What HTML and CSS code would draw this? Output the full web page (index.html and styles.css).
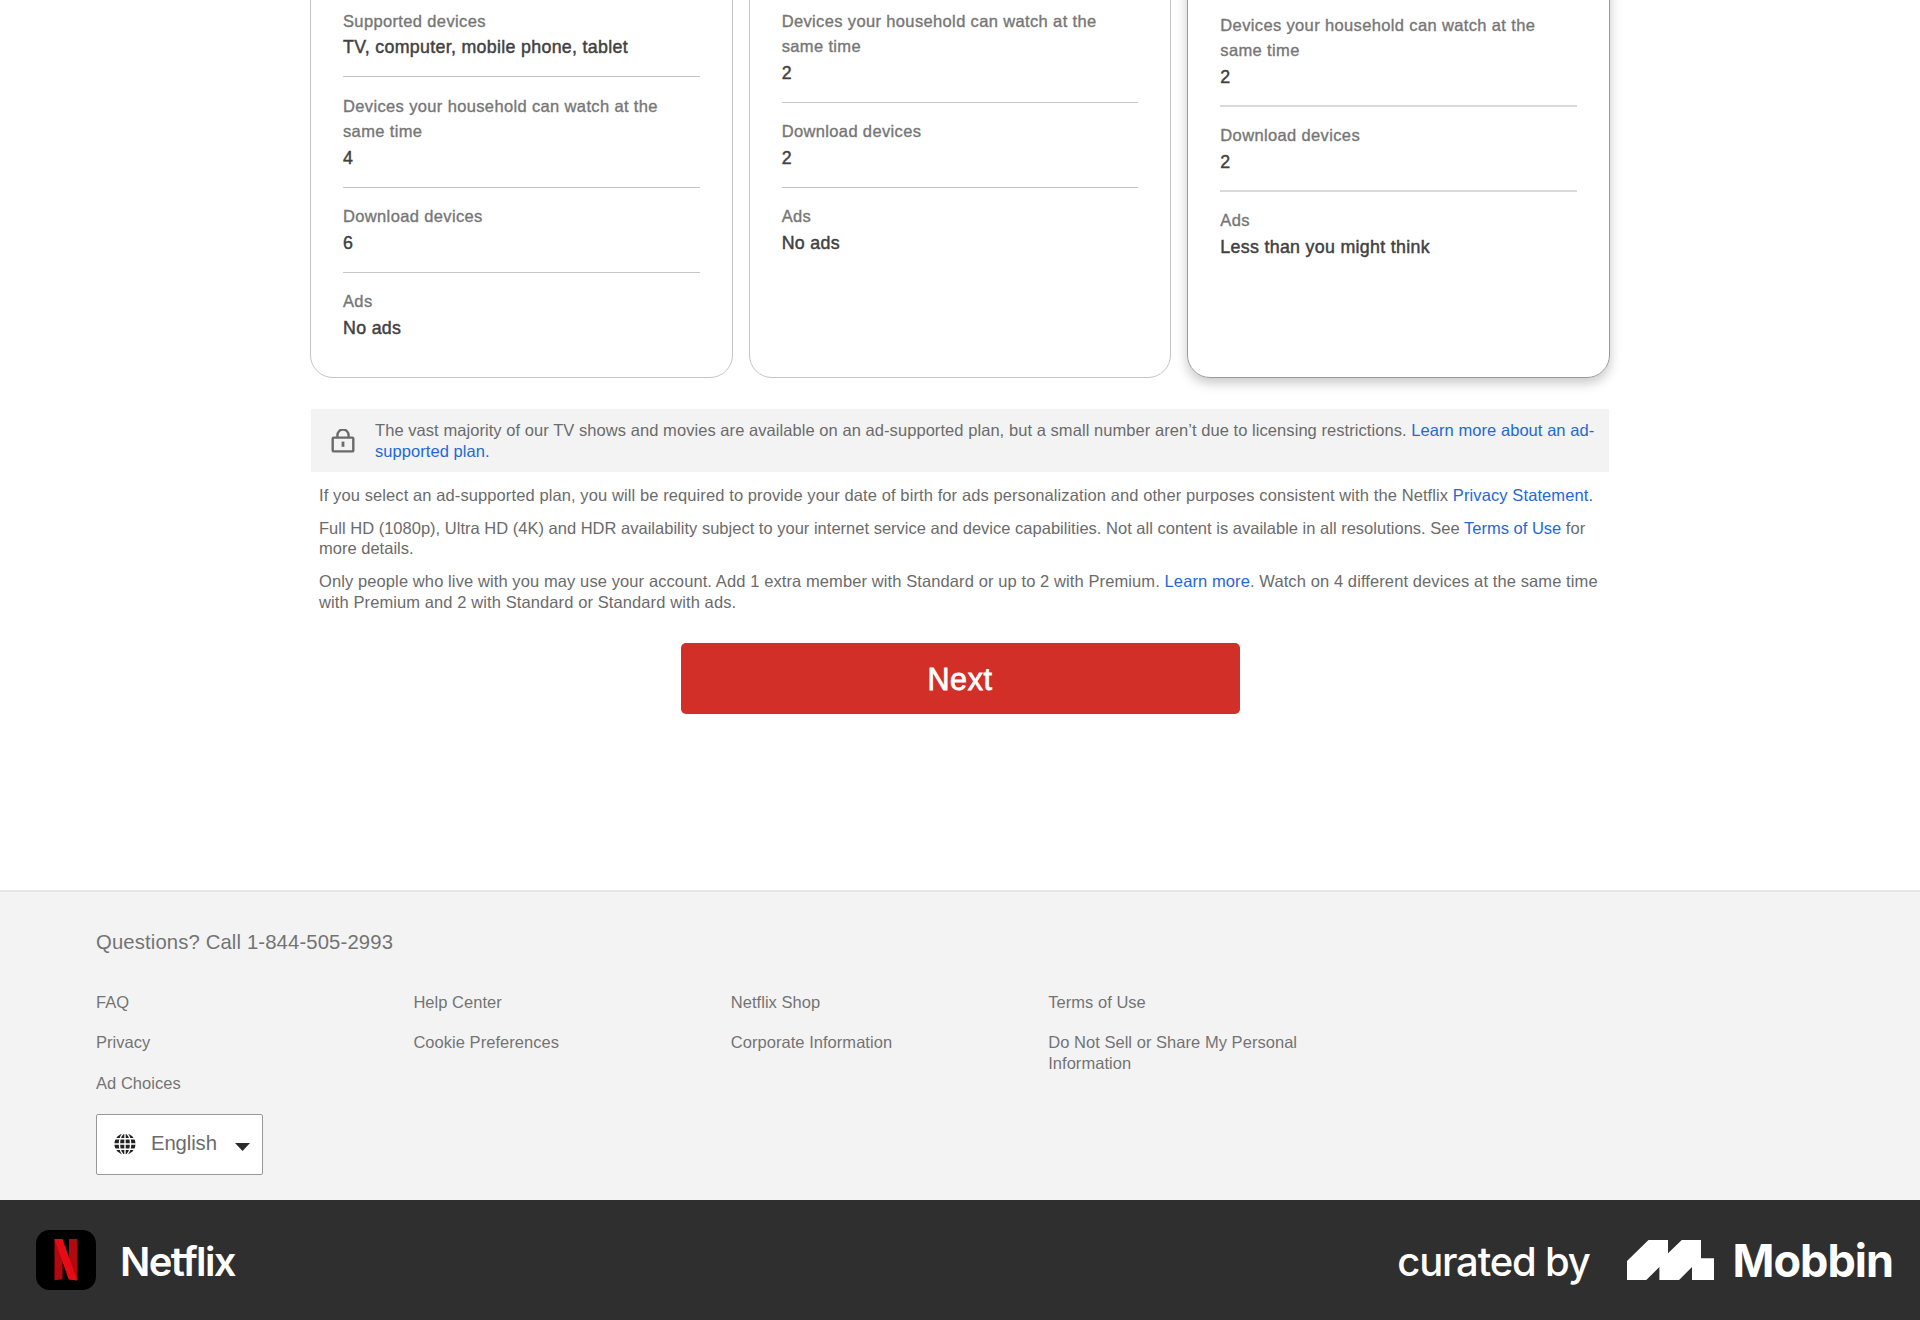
FILE: index.html
```html
<!DOCTYPE html>
<html lang="en">
<head>
<meta charset="utf-8">
<title>Netflix</title>
<link rel="stylesheet" href="styles.css">
</head>
<body>
<main class="main">
  <section class="plans">
    <article class="plan">
      <dl class="feature"><dt>Supported devices</dt><dd>TV, computer, mobile phone, tablet</dd></dl>
      <dl class="feature"><dt>Devices your household can watch at the same time</dt><dd>4</dd></dl>
      <dl class="feature"><dt>Download devices</dt><dd>6</dd></dl>
      <dl class="feature"><dt>Ads</dt><dd>No ads</dd></dl>
    </article>
    <article class="plan">
      <dl class="feature"><dt>Devices your household can watch at the same time</dt><dd>2</dd></dl>
      <dl class="feature"><dt>Download devices</dt><dd>2</dd></dl>
      <dl class="feature"><dt>Ads</dt><dd>No ads</dd></dl>
    </article>
    <article class="plan plan-selected">
      <dl class="feature"><dt>Devices your household can watch at the same time</dt><dd>2</dd></dl>
      <dl class="feature"><dt>Download devices</dt><dd>2</dd></dl>
      <dl class="feature"><dt>Ads</dt><dd>Less than you might think</dd></dl>
    </article>
  </section>

  <div class="notice">
    <svg class="lock" viewBox="0 0 24 24" fill="none" stroke="#6b6b6b" stroke-width="2.4">
      <rect x="1.7" y="8.6" width="20.6" height="13.8" rx="1"/>
      <path d="M6.4 8.5V6.2a5.6 5.6 0 0 1 11.2 0V8.5"/>
      <path d="M12 12.6v5.2" stroke-width="2.8"/>
    </svg>
    <p>The vast majority of our TV shows and movies are available on an ad-supported plan, but a small number aren’t due to licensing restrictions. <a>Learn more about an ad-<br>supported plan.</a></p>
  </div>

  <div class="legal">
    <p>If you select an ad-supported plan, you will be required to provide your date of birth for ads personalization and other purposes consistent with the Netflix <a>Privacy Statement.</a></p>
    <p class="tight">Full HD (1080p), Ultra HD (4K) and HDR availability subject to your internet service and device capabilities. Not all content is available in all resolutions. See <a>Terms of Use</a> for<br>more details.</p>
    <p>Only people who live with you may use your account. Add 1 extra member with Standard or up to 2 with Premium. <a>Learn more</a>. Watch on 4 different devices at the same time<br>with Premium and 2 with Standard or Standard with ads.</p>
  </div>

  <button class="next">Next</button>
</main>

<footer class="footer">
  <p class="questions">Questions? Call 1-844-505-2993</p>
  <div class="links">
    <ul><li>FAQ</li><li>Privacy</li><li>Ad Choices</li></ul>
    <ul><li>Help Center</li><li>Cookie Preferences</li></ul>
    <ul><li>Netflix Shop</li><li>Corporate Information</li></ul>
    <ul><li>Terms of Use</li><li>Do Not Sell or Share My Personal Information</li></ul>
  </div>
  <div class="language">
    <svg class="globe" viewBox="0 0 22 22">
      <circle cx="11" cy="11" r="10.6" fill="#222"/>
      <g fill="none" stroke="#fff" stroke-width="1.4">
        <path d="M0 5.8h22M0 11h22M0 16.2h22M11 0v22"/>
        <ellipse cx="11" cy="11" rx="5.6" ry="11"/>
      </g>
    </svg>
    <span class="language-name">English</span>
    <svg class="caret" viewBox="0 0 15 8"><path d="M0 0h15L7.5 8z" fill="#2b2b2b"/></svg>
  </div>
</footer>

<div class="credit">
  <div class="app">
    <svg class="app-icon" viewBox="0 0 60 60">
      <rect width="60" height="60" rx="13.5"/>
      <path d="M18.5 9h8v40.2l-8 1zM33 9h8.200v41.200l-8.200-1z" fill="#b20910"/>
      <path d="M18.500 9h8l14.700 41.500-8.500-1z" fill="#e50c15"/>
    </svg>
    <span class="app-name">Netflix</span>
  </div>
  <div class="curator">
    <span class="curated">curated by</span>
    <svg class="mark" viewBox="0 0 87 40"><path d="M0 21 21.500 0H41V13.300L54.800 0H74V18.300H87V40H65V27L52 40H32.400V27L19.300 40H0z" fill="#fff"/></svg>
    <span class="mobbin">Mobbin</span>
  </div>
</div>
</body>
</html>
```
FILE: styles.css
```css
* { box-sizing: border-box; }

body {
  margin: 0;
  width: 1920px;
  height: 1320px;
  overflow: hidden;
  display: flex;
  flex-direction: column;
  background: #fff;
  color: #6b6b6b;
  font: 16.5px/20.3px "Liberation Sans", Arial, sans-serif;
  letter-spacing: 0.04px;
}

p, dl, dd, ul { margin: 0; padding: 0; }
ul { list-style: none; }
a { color: #2368d8; }

.main {
  width: 1300px;
  height: 890px;
  margin: 0 auto;
  display: flex;
  flex-direction: column;
  align-items: center;
}

/* Plans */
.plans {
  width: 1300px;
  height: 418px;
  margin-top: -40px;
  flex: none;
  display: grid;
  grid-template-columns: repeat(3, 1fr);
  gap: 16px;
}

.plan {
  padding: 31px 32px 0;
  border: 1px solid #c4c4c4;
  border-radius: 23px;
}

.plan-selected {
  padding-top: 35px;
  border-color: #9a9a9a;
  box-shadow: 0 5px 12px rgba(0, 0, 0, 0.22);
}

.feature {
  padding: 16.7px 0 15.3px;
  border-bottom: 1px solid #c6c6c6;
}
.feature:last-child { border-bottom: 0; }

.plan-selected .feature:not(:last-child) {
  padding-bottom: 14.3px;
  border-bottom: 2px solid #d9d9d9;
}

.feature dt {
  line-height: 25.4px;
  letter-spacing: 0.36px;
  color: #767676;
  -webkit-text-stroke: 0.35px #767676;
}

.feature dd {
  padding-top: 1px;
  font-size: 17.8px;
  line-height: 25.7px;
  letter-spacing: 0.32px;
  color: #414141;
  -webkit-text-stroke: 0.45px #414141;
}

/* Notice and legal copy */
.notice {
  width: 1298px;
  height: 63px;
  margin-top: 31px;
  padding: 0 0 0 20px;
  display: flex;
  align-items: center;
  gap: 20px;
  background: #f3f3f3;
  white-space: nowrap;
  letter-spacing: 0.06px;
}
.lock { width: 24px; height: 24px; flex: none; }

.legal {
  width: 1282px;
  margin-top: 13px;
  display: flex;
  flex-direction: column;
  gap: 12.7px;
  white-space: nowrap;
}
.legal p { letter-spacing: 0.1px; }
.legal .tight { letter-spacing: 0.01px; }

.next {
  width: 559px;
  height: 71px;
  margin-top: 31px;
  padding: 2px 0 0;
  border: 0;
  border-radius: 5px;
  background: #d12f27;
  color: #fff;
  font: 30.5px "Liberation Sans", Arial, sans-serif;
  letter-spacing: 0.6px;
  -webkit-text-stroke: 0.8px #fff;
}

/* Footer */
.footer {
  height: 310px;
  padding: 40px 96px 0;
  border-top: 2px solid #e6e6e6;
  background: #f3f3f3;
  color: #737373;
}

.questions { font-size: 20.3px; letter-spacing: 0.13px; }

.links {
  margin-top: 39.5px;
  height: 122px;
  display: grid;
  grid-template-columns: repeat(4, 317.4px);
}
.links ul {
  padding-right: 50px;
  display: flex;
  flex-direction: column;
  gap: 20.3px;
}

.language {
  width: 167px;
  height: 61px;
  padding: 0 12px 0 17px;
  display: flex;
  align-items: center;
  border: 1px solid #999;
  border-radius: 2px;
  background: #fff;
  color: #6b6b6b;
  font-size: 20.3px;
  letter-spacing: -0.1px;
}
.language-name { padding-bottom: 3px; }
.globe { width: 22px; height: 22px; margin: 0 15px 1px 0; }
.caret { width: 15px; height: 8px; margin: 5px 0 0 auto; }

/* Credit bar */
.credit {
  height: 120px;
  padding: 0 27px 0 36px;
  display: flex;
  align-items: center;
  justify-content: space-between;
  background: #2f2f2f;
  color: #fff;
  font: 600 40px/48px Inter, sans-serif;
}
.app, .curator { display: flex; align-items: center; }
.app-icon { width: 60px; height: 60px; margin-right: 24px; }
.app-name { padding-top: 4px; letter-spacing: -1.6px; }
.curated { padding-top: 4px; font-weight: 550; letter-spacing: -1.2px; }
.mark { width: 87px; height: 40px; margin: 0 19px 0 37px; }
.mobbin { padding-top: 1px; font-size: 45px; font-weight: 700; letter-spacing: -1px; }
```
